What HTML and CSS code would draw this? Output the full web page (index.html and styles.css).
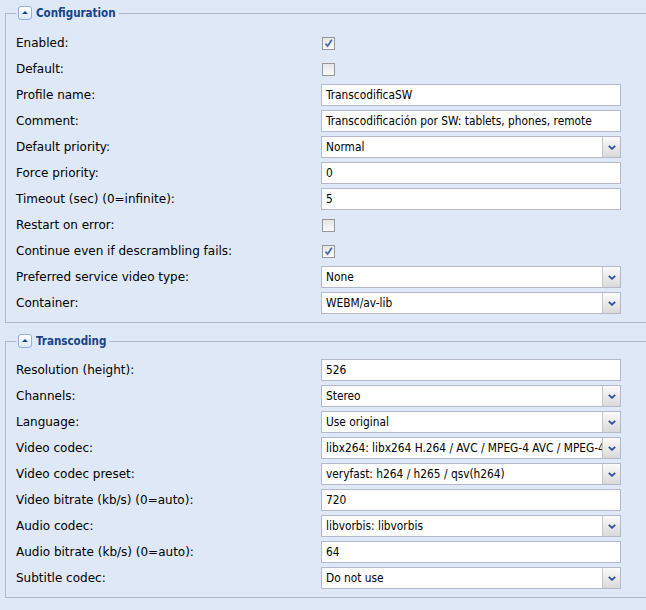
FILE: index.html
```html
<!DOCTYPE html>
<html>
<head>
<meta charset="utf-8">
<link rel="stylesheet" href="styles.css">
</head>
<body>
<fieldset class="panel">
  <legend class="panel-legend"><span class="legend-inner"><span class="tool"></span><span class="legend-text">Configuration</span></span></legend>
  <div class="form-grid">
    <div class="field-label">Enabled:</div>
    <div class="field"><span class="checkbox"><svg class="check" viewBox="0 0 11 11" width="11" height="11"><path d="M2.5 5.5 L4.6 8.2 L8.8 1.8" /></svg></span></div>

    <div class="field-label">Default:</div>
    <div class="field"><span class="checkbox"></span></div>

    <div class="field-label">Profile name:</div>
    <div class="field"><div class="textbox">TranscodificaSW</div></div>

    <div class="field-label">Comment:</div>
    <div class="field"><div class="textbox">Transcodificación por SW: tablets, phones, remote</div></div>

    <div class="field-label">Default priority:</div>
    <div class="field"><div class="combo"><span class="combo-text">Normal</span><span class="trigger"><svg viewBox="0 0 8 5" width="8" height="5"><path d="M0.8 0.8 L4 3.8 L7.2 0.8" /></svg></span></div></div>

    <div class="field-label">Force priority:</div>
    <div class="field"><div class="textbox">0</div></div>

    <div class="field-label">Timeout (sec) (0=infinite):</div>
    <div class="field"><div class="textbox">5</div></div>

    <div class="field-label">Restart on error:</div>
    <div class="field"><span class="checkbox"></span></div>

    <div class="field-label">Continue even if descrambling fails:</div>
    <div class="field"><span class="checkbox"><svg class="check" viewBox="0 0 11 11" width="11" height="11"><path d="M2.5 5.5 L4.6 8.2 L8.8 1.8" /></svg></span></div>

    <div class="field-label">Preferred service video type:</div>
    <div class="field"><div class="combo"><span class="combo-text">None</span><span class="trigger"><svg viewBox="0 0 8 5" width="8" height="5"><path d="M0.8 0.8 L4 3.8 L7.2 0.8" /></svg></span></div></div>

    <div class="field-label">Container:</div>
    <div class="field"><div class="combo"><span class="combo-text">WEBM/av-lib</span><span class="trigger"><svg viewBox="0 0 8 5" width="8" height="5"><path d="M0.8 0.8 L4 3.8 L7.2 0.8" /></svg></span></div></div>
  </div>
</fieldset>

<fieldset class="panel">
  <legend class="panel-legend"><span class="legend-inner"><span class="tool"></span><span class="legend-text">Transcoding</span></span></legend>
  <div class="form-grid">
    <div class="field-label">Resolution (height):</div>
    <div class="field"><div class="textbox">526</div></div>

    <div class="field-label">Channels:</div>
    <div class="field"><div class="combo"><span class="combo-text">Stereo</span><span class="trigger"><svg viewBox="0 0 8 5" width="8" height="5"><path d="M0.8 0.8 L4 3.8 L7.2 0.8" /></svg></span></div></div>

    <div class="field-label">Language:</div>
    <div class="field"><div class="combo"><span class="combo-text">Use original</span><span class="trigger"><svg viewBox="0 0 8 5" width="8" height="5"><path d="M0.8 0.8 L4 3.8 L7.2 0.8" /></svg></span></div></div>

    <div class="field-label">Video codec:</div>
    <div class="field"><div class="combo"><span class="combo-text">libx264: libx264 H.264 / AVC / MPEG-4 AVC / MPEG-4 part 10</span><span class="trigger"><svg viewBox="0 0 8 5" width="8" height="5"><path d="M0.8 0.8 L4 3.8 L7.2 0.8" /></svg></span></div></div>

    <div class="field-label">Video codec preset:</div>
    <div class="field"><div class="combo"><span class="combo-text">veryfast: h264 / h265 / qsv(h264)</span><span class="trigger"><svg viewBox="0 0 8 5" width="8" height="5"><path d="M0.8 0.8 L4 3.8 L7.2 0.8" /></svg></span></div></div>

    <div class="field-label">Video bitrate (kb/s) (0=auto):</div>
    <div class="field"><div class="textbox">720</div></div>

    <div class="field-label">Audio codec:</div>
    <div class="field"><div class="combo"><span class="combo-text">libvorbis: libvorbis</span><span class="trigger"><svg viewBox="0 0 8 5" width="8" height="5"><path d="M0.8 0.8 L4 3.8 L7.2 0.8" /></svg></span></div></div>

    <div class="field-label">Audio bitrate (kb/s) (0=auto):</div>
    <div class="field"><div class="textbox">64</div></div>

    <div class="field-label">Subtitle codec:</div>
    <div class="field"><div class="combo"><span class="combo-text">Do not use</span><span class="trigger"><svg viewBox="0 0 8 5" width="8" height="5"><path d="M0.8 0.8 L4 3.8 L7.2 0.8" /></svg></span></div></div>
  </div>
</fieldset>
</body>
</html>
```

FILE: styles.css
```css
html, body {
  margin: 0;
  padding: 0;
  background: #dfe8f6;
  overflow: hidden;
}

body {
  width: 646px;
  height: 610px;
  font-family: "DejaVu Sans", Verdana, sans-serif;
  font-size: 12px;
  color: #000;
}

.panel {
  margin: 5px -60px 10px 5px;
  padding: 11px 10px 8px 10px;
  border: 1px solid #b5b8c8;
  min-width: 0;
}

.panel + .panel {
  margin-top: 10px;
  padding-top: 10px;
}

.panel-legend {
  padding: 0 3px 0 2px;
}

.legend-inner {
  display: flex;
  align-items: center;
  gap: 4px;
  height: 16px;
}

.tool {
  position: relative;
  display: block;
  width: 12px;
  height: 12px;
  border: 1px solid #8fb0e0;
  border-radius: 3px;
  background: linear-gradient(#ffffff, #dde7f6);
}

.tool::after {
  content: "";
  position: absolute;
  left: 3px;
  top: 4px;
  border-left: 3px solid transparent;
  border-right: 3px solid transparent;
  border-bottom: 3px solid #15428b;
}

.legend-text {
  font-family: "DejaVu Sans Condensed", "DejaVu Sans", sans-serif;
  font-weight: bold;
  font-size: 11.5px;
  color: #15428b;
}

.form-grid {
  display: grid;
  grid-template-columns: 305px 300px;
  grid-auto-rows: 22px;
  row-gap: 4px;
  align-items: center;
}

.field-label {
  line-height: 22px;
  white-space: nowrap;
}

.field {
  display: flex;
  align-items: center;
  height: 22px;
}

.checkbox {
  display: block;
  box-sizing: border-box;
  width: 13px;
  height: 13px;
  margin-left: 1px;
  border: 1px solid #979797;
  background: linear-gradient(#e6e6e6, #fafafa);
}

.check {
  display: block;
}

.check path {
  fill: none;
  stroke: #3c5ea6;
  stroke-width: 1.6;
}

.textbox,
.combo {
  box-sizing: border-box;
  width: 300px;
  height: 22px;
  border: 1px solid #b5b8c8;
  background: #fff;
  font-family: "DejaVu Sans Condensed", "DejaVu Sans", sans-serif;
  font-size: 11.8px;
  line-height: 20px;
  white-space: nowrap;
  overflow: hidden;
}

.textbox {
  padding: 0 4px;
}

.combo {
  display: flex;
}

.combo-text {
  flex: 1;
  min-width: 0;
  overflow: hidden;
  padding: 0 4px;
}

.trigger {
  flex: none;
  display: flex;
  align-items: center;
  justify-content: center;
  width: 17px;
  border-left: 1px solid #c3c6d0;
  background: linear-gradient(#fbfbfb, #d9d9d9);
}

.trigger path {
  fill: none;
  stroke: #2a4d99;
  stroke-width: 1.8;
}
```
